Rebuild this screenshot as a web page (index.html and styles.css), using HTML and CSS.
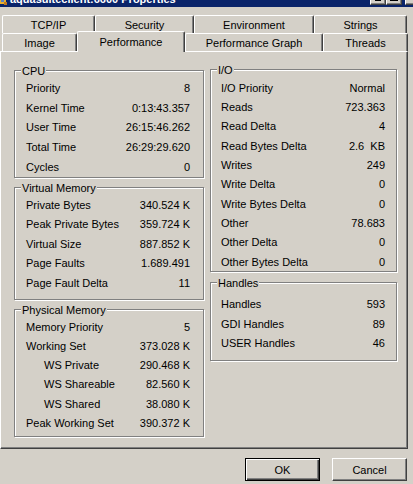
FILE: index.html
```html
<!DOCTYPE html>
<html>
<head>
<meta charset="utf-8">
<link rel="stylesheet" href="styles.css">
</head>
<body>
<div class="titlebar">
  <div class="title">
    <svg class="app-icon" width="8" height="7" viewBox="0 0 8 7"><rect x="0" y="0" width="6" height="5" fill="#e8b030"/><rect x="1" y="1" width="3" height="2" fill="#5a7fc0"/><rect x="4" y="3" width="3" height="3" fill="#c07820"/></svg>
    <span class="title-text">aquasuiteclient:6600 Properties</span>
  </div>
  <div class="caption-buttons">
    <div class="cbtn"><span class="glyph-min"></span></div>
    <div class="cbtn"><span class="glyph-max"></span></div>
    <div class="cbtn cbtn-close"></div>
  </div>
</div>

<div class="tabs">
  <div class="tab-row">
    <div class="tab w-tcp">TCP/IP</div>
    <div class="tab w-sec">Security</div>
    <div class="tab w-env">Environment</div>
    <div class="tab w-str">Strings</div>
  </div>
  <div class="tab-row front">
    <div class="tab w-img">Image</div>
    <div class="tab selected w-perf">Performance</div>
    <div class="tab w-graph">Performance Graph</div>
    <div class="tab w-thr">Threads</div>
  </div>
</div>

<div class="panel">
  <div class="col col-left">
    <div class="group g-cpu">
      <div class="gtitle">CPU</div>
      <div class="rows">
        <div class="row"><span>Priority</span><span>8</span></div>
        <div class="row"><span>Kernel Time</span><span>0:13:43.357</span></div>
        <div class="row"><span>User Time</span><span>26:15:46.262</span></div>
        <div class="row"><span>Total Time</span><span>26:29:29.620</span></div>
        <div class="row"><span>Cycles</span><span>0</span></div>
      </div>
    </div>
    <div class="group g-vm">
      <div class="gtitle">Virtual Memory</div>
      <div class="rows">
        <div class="row"><span>Private Bytes</span><span>340.524 K</span></div>
        <div class="row"><span>Peak Private Bytes</span><span>359.724 K</span></div>
        <div class="row"><span>Virtual Size</span><span>887.852 K</span></div>
        <div class="row"><span>Page Faults</span><span>1.689.491</span></div>
        <div class="row"><span>Page Fault Delta</span><span>11</span></div>
      </div>
    </div>
    <div class="group g-phys">
      <div class="gtitle">Physical Memory</div>
      <div class="rows">
        <div class="row"><span>Memory Priority</span><span>5</span></div>
        <div class="row"><span>Working Set</span><span>373.028 K</span></div>
        <div class="row"><span class="indent">WS Private</span><span>290.468 K</span></div>
        <div class="row"><span class="indent">WS Shareable</span><span>82.560 K</span></div>
        <div class="row"><span class="indent">WS Shared</span><span>38.080 K</span></div>
        <div class="row"><span>Peak Working Set</span><span>390.372 K</span></div>
      </div>
    </div>
  </div>
  <div class="col col-right">
    <div class="group g-io">
      <div class="gtitle">I/O</div>
      <div class="rows">
        <div class="row"><span>I/O Priority</span><span>Normal</span></div>
        <div class="row"><span>Reads</span><span>723.363</span></div>
        <div class="row"><span>Read Delta</span><span>4</span></div>
        <div class="row"><span>Read Bytes Delta</span><span>2.6&nbsp;&nbsp;KB</span></div>
        <div class="row"><span>Writes</span><span>249</span></div>
        <div class="row"><span>Write Delta</span><span>0</span></div>
        <div class="row"><span>Write Bytes Delta</span><span>0</span></div>
        <div class="row"><span>Other</span><span>78.683</span></div>
        <div class="row"><span>Other Delta</span><span>0</span></div>
        <div class="row"><span>Other Bytes Delta</span><span>0</span></div>
      </div>
    </div>
    <div class="group g-handles">
      <div class="gtitle">Handles</div>
      <div class="rows">
        <div class="row"><span>Handles</span><span>593</span></div>
        <div class="row"><span>GDI Handles</span><span>89</span></div>
        <div class="row"><span>USER Handles</span><span>46</span></div>
      </div>
    </div>
  </div>
</div>

<div class="buttons">
  <button class="btn btn-default">OK</button>
  <button class="btn">Cancel</button>
</div>
</body>
</html>
```
FILE: styles.css
```css
* { box-sizing: border-box; }
html, body { margin: 0; padding: 0; }
body {
  background: #D4D0C8;
  font-family: "Liberation Sans", Arial, sans-serif;
  font-size: 11px;
  color: #000;
  width: 413px;
  height: 484px;
  overflow: hidden;
}

/* title bar */
.titlebar {
  height: 7px;
  background: #0A246A;
  display: flex;
  justify-content: space-between;
  overflow: hidden;
}
.title { display: flex; align-items: flex-start; }
.app-icon { display: block; margin-top: -1px; }
.title-text {
  color: #fff;
  font-weight: bold;
  line-height: 13px;
  margin-top: -7px;
  margin-left: 2px;
  white-space: nowrap;
}
.caption-buttons { display: flex; gap: 0; margin-right: -8px; }
.cbtn {
  width: 16px;
  height: 14px;
  margin-top: -9px;
  background: #D4D0C8;
  border: 1px solid;
  border-color: #fff #404040 #404040 #fff;
  box-shadow: inset -1px -1px 0 #808080;
  display: flex;
  justify-content: center;
  align-items: flex-end;
  padding-bottom: 3px;
}
.cbtn-close { margin-left: 3px; }
.glyph-min { width: 6px; height: 2px; background: #000; }
.glyph-max { width: 8px; height: 7px; border: 1px solid #000; border-top-width: 2px; }

/* tabs */
.tabs { padding-top: 8px; }
.tab-row {
  display: flex;
  height: 18px;
  padding-left: 2px;
  align-items: flex-start;
}
.tab {
  height: 18px;
  flex: none;
  display: flex;
  justify-content: center;
  align-items: center;
  white-space: nowrap;
  border-top: 1px solid #fff;
  border-left: 1px solid #fff;
  border-right: 1px solid #404040;
  border-radius: 2px 2px 0 0;
  box-shadow: inset -1px 0 0 #808080;
  background: #D4D0C8;
}
.front .tab { padding-top: 1px; }
.tab.selected {
  position: relative;
  z-index: 2;
  height: 21px;
  margin-top: -2px;
  padding-top: 0;
  padding-bottom: 1px;
  box-shadow: inset -1px 0 0 #808080;
}
.w-tcp { width: 93px; }
.w-sec { width: 99px; }
.w-env { width: 120px; }
.w-str { width: 93px; }
.w-img { width: 75px; }
.w-perf { width: 108px; }
.w-graph { width: 138px; }
.w-thr { width: 85px; }

/* panel */
.panel {
  width: 408px;
  height: 398px;
  border-top: 1px solid #fff;
  border-left: 1px solid #fff;
  border-right: 1px solid #404040;
  border-bottom: 1px solid #404040;
  box-shadow: inset -1px -1px 0 #808080;
  display: flex;
  gap: 6px;
  padding-left: 13px;
}
.col { display: flex; flex-direction: column; }
.col-left { width: 190px; margin-top: 18px; gap: 9px; }
.col-right { width: 187px; margin-top: 17px; gap: 10px; }

.group {
  border: 1px solid #808080;
  box-shadow: inset 1px 1px 0 #fff, 1px 1px 0 #fff;
  display: flex;
  flex-direction: column;
  flex: none;
}
.gtitle {
  align-self: flex-start;
  margin: -6px 0 0 6px;
  padding: 0 1px;
  line-height: 13px;
  background: #D4D0C8;
  white-space: nowrap;
}
.rows { padding: var(--pt) 13px 0 11px; }
.col-right .rows { padding-left: 10px; padding-right: 11px; }
.row {
  display: flex;
  justify-content: space-between;
  align-items: center;
  height: var(--rh);
  white-space: nowrap;
}
.indent { padding-left: 18px; }

.g-cpu { height: 108px; --rh: 19.75px; --pt: 0px; }
.g-vm { height: 113px; --rh: 19.5px; --pt: 0px; }
.g-phys { height: 128px; --rh: 19.25px; --pt: 0px; }
.g-io { height: 203px; --rh: 19.33px; --pt: 1px; }
.g-handles { height: 79px; --rh: 19.75px; --pt: 4px; }

/* buttons */
.buttons {
  display: flex;
  justify-content: flex-end;
  gap: 12px;
  padding: 9px 6px 0 0;
}
.btn {
  width: 75px;
  height: 23px;
  padding: 0;
  margin: 0;
  font-family: "Liberation Sans", Arial, sans-serif;
  font-size: 11px;
  color: #000;
  background: #D4D0C8;
  border: 1px solid;
  border-color: #fff #404040 #404040 #fff;
  box-shadow: inset -1px -1px 0 #808080;
  border-radius: 0;
}
.btn-default {
  border: 1px solid #000;
  box-shadow: inset 1px 1px 0 #fff, inset -1px -1px 0 #404040, inset -2px -2px 0 #808080;
}
```
